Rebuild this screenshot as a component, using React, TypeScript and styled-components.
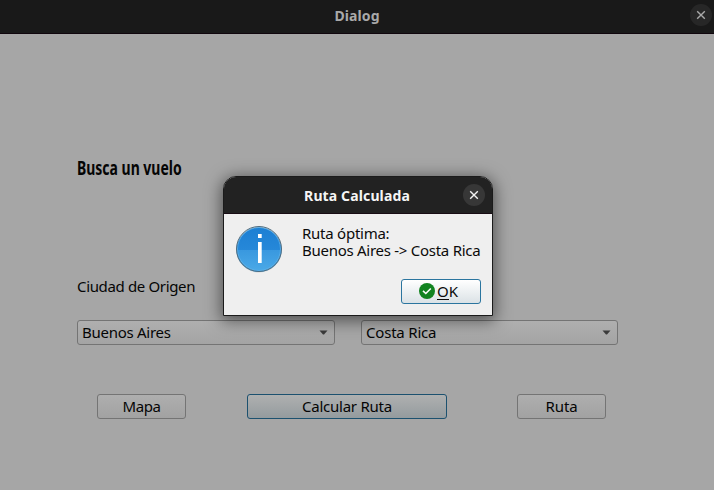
import React from 'react';
import styled, { createGlobalStyle } from 'styled-components';

const GlobalStyle = createGlobalStyle`
  * { box-sizing: border-box; }
  body { margin: 0; overflow: hidden; }
`;

const Window = styled.div`
  position: relative;
  width: 714px;
  height: 490px;
  background: #a6a6a6;
  color: #050505;
  font: 15px/17px "Noto Sans", sans-serif;
  overflow: hidden;
`;

const TitleBar = styled.header<{ $dim?: boolean }>`
  display: grid;
  grid-template-columns: ${p => (p.$dim ? '24px 1fr 24px' : '32px 1fr 32px')};
  align-items: center;
  justify-items: center;
  height: ${p => (p.$dim ? 34 : 37)}px;
  padding: ${p => (p.$dim ? '0 1px 3px' : '0 2px 1px 0')};
  background: ${p => (p.$dim ? '#191919' : '#222222')};
  border-bottom: 1px solid ${p => (p.$dim ? '#10060d' : '#180c14')};
  color: ${p => (p.$dim ? '#a9a9a9' : '#f5f5f5')};
`;

const Title = styled.h1<{ $spacing: number }>`
  grid-column: 2;
  margin: 2px 0 0;
  font-size: 14px;
  line-height: 20px;
  font-weight: 700;
  letter-spacing: ${p => p.$spacing}px;
  white-space: nowrap;
`;

const CloseButton = styled.button<{ $dim?: boolean }>`
  display: grid;
  place-items: center;
  width: 22px;
  height: 22px;
  padding: 0;
  border: 0;
  border-radius: 50%;
  background: ${p => (p.$dim ? '#272727' : '#373737')};
  color: ${p => (p.$dim ? '#a9a9a9' : '#f2f2f2')};
`;

const Form = styled.main`
  padding: 122px 96px 0 77px;
`;

const Heading = styled.h2`
  width: max-content;
  margin: 0;
  font-size: 19px;
  line-height: 24px;
  font-weight: 700;
  transform: scaleX(0.735);
  transform-origin: left;
`;

const Text = styled.span<{ $spacing?: number }>`
  letter-spacing: ${p => p.$spacing ?? 0}px;
  white-space: nowrap;
`;

const FieldLabel = styled.div`
  margin-top: 98px;
  height: 17px;
`;

const Fields = styled.div`
  display: grid;
  grid-template-columns: 258px 257px;
  column-gap: 26px;
  margin-top: 25px;
`;

const Select = styled.div`
  display: flex;
  align-items: center;
  justify-content: space-between;
  height: 25px;
  padding: 0 6px 0 4px;
  border: 1px solid #747474;
  border-radius: 3px;
  background: linear-gradient(#afafaf, #a4a4a4);
`;

const Actions = styled.div`
  display: grid;
  grid-template-columns: 150px 270px 89px;
  margin: 49px 12px 0 20px;
`;

const Button = styled.button<{ $width: number; $primary?: boolean }>`
  width: ${p => p.$width}px;
  height: 25px;
  padding: 0 0 1px;
  border: 1px solid ${p => (p.$primary ? '#1c516f' : '#747474')};
  border-radius: 3px;
  background: ${p => (p.$primary ? 'linear-gradient(#afb0b0, #949b9e)' : 'linear-gradient(#aeaeae, #a2a2a2)')};
  color: inherit;
  font: inherit;
`;

const Dialog = styled.section`
  position: absolute;
  left: 223px;
  top: 176px;
  width: 270px;
  height: 140px;
  border: 1px solid #1b1b1b;
  border-radius: 13px 13px 0 0;
  background: #efefef;
  color: #0b0b0b;
  box-shadow: 0 3px 16px 2px rgba(0, 0, 0, 0.5);
  overflow: hidden;
`;

const Message = styled.div`
  display: grid;
  grid-template-columns: 48px 1fr;
  column-gap: 19px;
  padding: 11px 0 0 11px;
`;

const MessageText = styled.p`
  display: flex;
  flex-direction: column;
  margin: 0;
`;

const DialogActions = styled.div`
  display: flex;
  justify-content: flex-end;
  margin: 6px 11px 0;
`;

const OkButton = styled.button`
  display: flex;
  align-items: flex-start;
  width: 80px;
  height: 25px;
  padding: 3px 0 0 17px;
  gap: 2px;
  border: 1px solid #2b759f;
  border-radius: 3px;
  background: linear-gradient(#ffffff, #dbe2e6);
  color: inherit;
  font: inherit;
`;

const Mnemonic = styled.span`
  display: inline-block;
  height: 17px;
  border-bottom: 1px solid #0b0b0b;
`;

const CloseIcon = () => (
  <svg width="10" height="10" viewBox="0 0 10 10" fill="none" stroke="currentColor" strokeWidth="1.4">
    <path d="M1.2 1.2 8.8 8.8M8.8 1.2 1.2 8.8" />
  </svg>
);

const ArrowIcon = () => (
  <svg width="9" height="5" viewBox="0 0 9 5"><path d="M.5.5h8l-3.5 4h-1z" fill="#3b3b3b" /></svg>
);

const InfoIcon = () => (
  <svg width="48" height="48" viewBox="0 0 48 48">
    <defs>
      <linearGradient id="infoTop" x2="0" y2="1"><stop stopColor="#1d7fd3" /><stop offset="1" stopColor="#2688d9" /></linearGradient>
      <linearGradient id="infoBottom" x2="0" y2="1"><stop stopColor="#3998df" /><stop offset="1" stopColor="#4baae8" /></linearGradient>
    </defs>
    <circle cx="24" cy="24.6" r="23" fill="#d3d3d3" />
    <path d="M1.5 25a22.5 22.5 0 0 1 45 0z" fill="url(#infoTop)" />
    <path d="M1.5 25a22.5 22 0 0 0 45 0z" fill="url(#infoBottom)" />
    <circle cx="24" cy="24" r="21.5" fill="none" stroke="#5db2eb" strokeWidth=".8" />
    <circle cx="24" cy="24" r="22.5" fill="none" stroke="#4d6c80" />
    <path d="M23 9h3.7v4H23zM23 17h3.7v21H23z" fill="#fff" />
  </svg>
);

const CheckIcon = () => (
  <svg width="16" height="16" viewBox="0 0 16 16">
    <circle cx="8" cy="8" r="8" fill="#128320" />
    <path d="m4 7.9 2.8 2.6 5-5" fill="none" stroke="#fff" strokeWidth="1.6" />
  </svg>
);

export default function App() {
  return (
    <Window>
      <GlobalStyle />
      <TitleBar $dim>
        <Title $spacing={0.1}>Dialog</Title>
        <CloseButton $dim aria-label="Cerrar"><CloseIcon /></CloseButton>
      </TitleBar>
      <Form>
        <Heading>Busca un vuelo</Heading>
        <FieldLabel><Text $spacing={-0.35}>Ciudad de Origen</Text></FieldLabel>
        <Fields>
          <Select><Text $spacing={-0.27}>Buenos Aires</Text><ArrowIcon /></Select>
          <Select><Text $spacing={-0.2}>Costa Rica</Text><ArrowIcon /></Select>
        </Fields>
        <Actions>
          <Button $width={89}><Text $spacing={-0.4}>Mapa</Text></Button>
          <Button $width={200} $primary><Text $spacing={-0.25}>Calcular Ruta</Text></Button>
          <Button $width={89}><Text $spacing={-0.15}>Ruta</Text></Button>
        </Actions>
      </Form>
      <Dialog role="dialog">
        <TitleBar>
          <Title $spacing={0.13}>Ruta Calculada</Title>
          <CloseButton aria-label="Cerrar"><CloseIcon /></CloseButton>
        </TitleBar>
        <Message>
          <InfoIcon />
          <MessageText>
            <Text $spacing={-0.25}>Ruta óptima:</Text>
            <Text $spacing={-0.27}>Buenos Aires -&gt; Costa Rica</Text>
          </MessageText>
        </Message>
        <DialogActions>
          <OkButton><CheckIcon /><Text><Mnemonic>O</Mnemonic>K</Text></OkButton>
        </DialogActions>
      </Dialog>
    </Window>
  );
}
